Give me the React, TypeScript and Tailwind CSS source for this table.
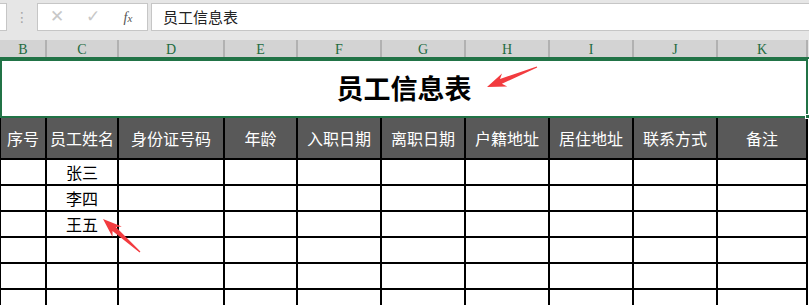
const cols = [
  { key: "B", w: "w-[44px]", title: "序号" },
  { key: "C", w: "w-[70px]", title: "员工姓名" },
  { key: "D", w: "w-[104px]", title: "身份证号码" },
  { key: "E", w: "w-[71px]", title: "年龄" },
  { key: "F", w: "w-[82px]", title: "入职日期" },
  { key: "G", w: "w-[82px]", title: "离职日期" },
  { key: "H", w: "w-[82px]", title: "户籍地址" },
  { key: "I", w: "w-[82px]", title: "居住地址" },
  { key: "J", w: "w-[82px]", title: "联系方式" },
  { key: "K", w: "w-[88px]", title: "备注" },
];

const rows = ["张三", "李四", "王五", "", "", ""];

const cjk = "font-['Noto_Sans_CJK_SC','Noto_Sans',sans-serif]";

// tapered red callout arrow, tip first then tail
function Arrow({ tip, tail }: { tip: [number, number]; tail: [number, number] }) {
  const dx = tail[0] - tip[0];
  const dy = tail[1] - tip[1];
  const len = Math.hypot(dx, dy);
  const ux = dx / len;
  const uy = dy / len;
  const px = -uy;
  const py = ux;
  const at = (a: number, b: number) =>
    `${(tip[0] + ux * a + px * b).toFixed(1)},${(tip[1] + uy * a + py * b).toFixed(1)}`;
  const pts = [
    at(0, 0),
    at(19, 7),
    at(15, 2.6),
    at(len, 0.6),
    at(len, -0.6),
    at(15, -2.6),
    at(19, -7),
  ].join(" ");
  return <polygon points={pts} fill="#f23b3f" />;
}

function FormulaBar() {
  return (
    <div className="h-[40px] bg-[#e6e6e6] flex items-start pt-[3px]">
      <div className="w-[7px] h-[28px] bg-white border border-l-0 border-[#c6c6c6]" />
      <div className="w-[30px] h-[28px] flex items-center justify-center text-[#a6a6a6] text-[14px] leading-none font-['DejaVu_Sans',sans-serif]">
        ⋮
      </div>
      <div className="w-[111px] h-[28px] bg-white border border-[#c6c6c6] flex items-center">
        <span className="w-[38px] text-center text-[#c8c8c8] text-[17px] font-['DejaVu_Sans',sans-serif]">✕</span>
        <span className="w-[34px] text-center text-[#c8c8c8] text-[17px] font-['DejaVu_Sans',sans-serif]">✓</span>
        <span className="w-[36px] text-center text-[#555] text-[14px] italic font-['Liberation_Serif',serif]">
          f<span className="text-[11px]">x</span>
        </span>
      </div>
      <div className={`ml-[3px] flex-1 h-[28px] bg-white border border-r-0 border-[#c6c6c6] flex items-center pl-[11px] text-[15px] text-[#222] ${cjk}`}>
        员工信息表
      </div>
    </div>
  );
}

function ColumnHeaders() {
  return (
    <div className="h-[19px] bg-[#d3d3d3] flex border-b-2 border-[#217346]">
      <div className="w-px" />
      {cols.map((c) => (
        <div
          key={c.key}
          className={`${c.w} box-content border-r-2 border-[#b1b1b1] flex items-center justify-center pt-[2px] text-[14px] text-[#1e6b3f] font-['Liberation_Serif',serif]`}
        >
          {c.key}
        </div>
      ))}
      <div className="flex-1 bg-[#e6e6e6]" />
    </div>
  );
}

export default function App() {
  return (
    <div className="relative w-[809px] h-[305px] overflow-hidden bg-white">
      <FormulaBar />
      <ColumnHeaders />

      {/* merged title cell with the selection frame */}
      <div className="w-[808px] h-[59px] border-2 border-[#217346] flex items-center justify-center">
        <span className={`text-[27px] font-semibold text-black ${cjk}`}>员工信息表</span>
      </div>

      <div className="w-[808px] bg-black pl-px pr-[2px] flex flex-col gap-[2px]">
        <div className="flex gap-[2px]">
          {cols.map((c) => (
            <div
              key={c.key}
              className={`${c.w} h-[40px] bg-[#595959] flex items-center justify-center text-white text-[16px] ${cjk}`}
            >
              {c.title}
            </div>
          ))}
        </div>
        {rows.map((name, i) => (
          <div key={i} className="flex gap-[2px]">
            {cols.map((c) => (
              <div
                key={c.key}
                className={`${c.w} h-[24px] bg-white flex items-center justify-center text-black text-[16px] ${cjk}`}
              >
                {c.key === "C" ? name : ""}
              </div>
            ))}
          </div>
        ))}
      </div>

      {/* fill handle of the selection */}
      <div className="absolute left-[805px] top-[114px] w-[5px] h-[5px] bg-[#217346] border border-white" />

      <svg className="absolute inset-0 pointer-events-none" width="809" height="305">
        <Arrow tip={[487, 87]} tail={[537, 67]} />
        <Arrow tip={[103, 219]} tail={[140, 252]} />
      </svg>
    </div>
  );
}
